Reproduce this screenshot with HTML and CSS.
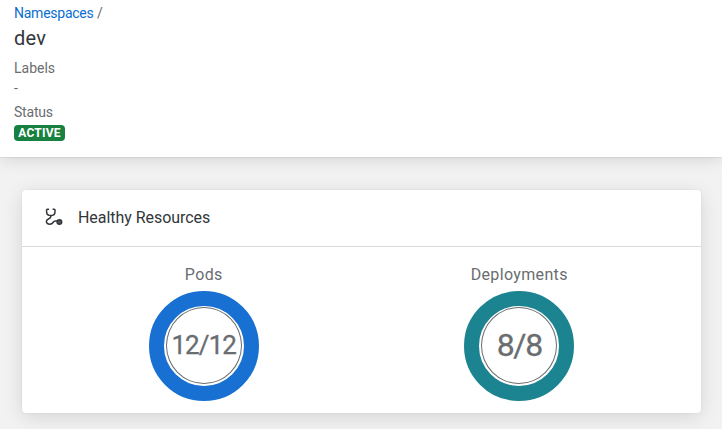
FILE: index.html
```
<!DOCTYPE html>
<html lang="en">
<head>
<meta charset="utf-8">
<title>dev</title>
<link rel="stylesheet" href="styles.css">
</head>
<body>
<header class="page-header">
  <nav class="breadcrumb"><a class="crumb" href="#">Namespaces</a> <span class="slash">/</span></nav>
  <h1 class="title">dev</h1>
  <div class="label labels">Labels</div>
  <div class="value">-</div>
  <div class="label status">Status</div>
  <span class="badge">ACTIVE</span>
</header>
<main class="card">
  <div class="card-header">
    <svg class="icon" width="18" height="18" viewBox="0 0 18 18" fill="none" stroke="#32363a" stroke-width="1.5" stroke-linecap="round" stroke-linejoin="round">
      <path d="M3.5 1.3H2.4Q1.6 1.3 1.6 2.1V3.7C1.6 6 3.3 7.6 5.8 7.6S10 6 10 3.7V2.1Q10 1.3 9.2 1.3H8.1"/>
      <path d="M5.8 7.8V8.8C5.8 11 1.4 10.5 1.4 13.3C1.4 15.4 3 16.2 4.9 16.2C8.8 16.2 7.2 13 10.5 13H12"/>
      <circle cx="14.4" cy="14" r="2.3" fill="#55595d"/>
    </svg>
    <h2 class="card-title">Healthy Resources</h2>
  </div>
  <div class="charts">
    <section class="chart">
      <h3 class="chart-title pods-title">Pods</h3>
      <div class="ring pods"><div class="inner"><span>12/12</span></div></div>
    </section>
    <section class="chart">
      <h3 class="chart-title deployments-title">Deployments</h3>
      <div class="ring deployments"><div class="inner"><span>8/8</span></div></div>
    </section>
  </div>
</main>
</body>
</html>
```
FILE: styles.css
```
* { box-sizing: border-box; }
body {
  margin: 0;
  height: 429px;
  overflow: hidden;
  background: #f2f2f2;
  color: #6a6d70;
  font-family: Roboto, "Liberation Sans", sans-serif;
  font-size: 14px;
}
h1, h2, h3 { margin: 0; font-weight: 400; }
.page-header {
  height: 157px;
  padding: 4px 14px 0;
  background: #fff;
  box-shadow: 0 0 1px rgba(0,0,0,.35), 0 2px 16px rgba(0,0,0,.13);
}
.breadcrumb { height: 20px; line-height: 19px; }
.crumb { color: #0a6ed1; text-decoration: none; letter-spacing: -.25px; }
.title { height: 34px; line-height: 29px; font-size: 20px; color: #32363a; letter-spacing: .3px; }
.label { height: 20px; line-height: 20px; }
.status { letter-spacing: -.2px; }
.value { height: 24px; line-height: 20px; }
.badge {
  display: block;
  width: 51px;
  height: 16px;
  margin-top: 3px;
  border-radius: 4px;
  background: #188040;
  color: #fff;
  font-size: 12px;
  font-weight: 700;
  line-height: 16px;
  text-align: center;
  letter-spacing: .2px;
}
.card {
  width: 679px;
  height: 223px;
  margin: 33px 0 0 22px;
  border-radius: 4px;
  background: #fff;
  box-shadow: 0 0 2px rgba(0,0,0,.08), 0 4px 20px rgba(0,0,0,.12);
}
.card-header {
  display: flex;
  align-items: center;
  height: 57px;
  padding: 0 23px;
  border-bottom: 1px solid #d9d9d9;
}
.icon { margin-top: -2px; }
.card-title { margin: -1px 0 0 15px; font-size: 16px; line-height: 24px; color: #32363a; letter-spacing: -.05px; }
.charts { display: grid; grid-template-columns: 1fr 1fr; padding: 15px 24px 0; }
.chart { display: flex; flex-direction: column; align-items: center; }
.chart-title { height: 29px; line-height: 26px; font-size: 16px; letter-spacing: .35px; }
.ring {
  display: grid;
  place-items: center;
  width: 110px;
  height: 110px;
  border: 15px solid;
  border-radius: 50%;
}
.pods { border-color: #1870d2; font-size: 26px; letter-spacing: -.9px; }
.deployments { border-color: #1b8490; font-size: 32px; letter-spacing: -1.4px; }
.inner {
  display: grid;
  place-items: center;
  width: 76px;
  height: 77px;
  margin-bottom: 1px;
  padding-bottom: 2px;
  border: 1px solid #6a6d70;
  border-radius: 50%;
  white-space: nowrap;
  -webkit-text-stroke: .3px #6a6d70;
}
```
